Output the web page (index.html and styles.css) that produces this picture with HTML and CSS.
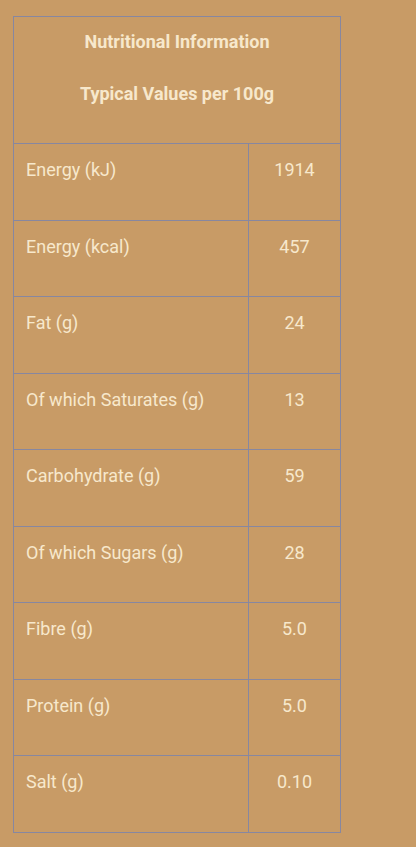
FILE: index.html
```html
<!DOCTYPE html>
<html>
<head>
<meta charset="utf-8">
<link rel="stylesheet" href="styles.css">
</head>
<body>
<div class="wrap">
<table class="nutri">
  <thead>
    <tr>
      <th colspan="2" class="head">
        <p class="title">Nutritional Information</p>
        <p class="title">Typical Values per 100g</p>
      </th>
    </tr>
  </thead>
  <tbody>
    <tr><td class="label">Energy (kJ)</td><td class="val">1914</td></tr>
    <tr><td class="label">Energy (kcal)</td><td class="val">457</td></tr>
    <tr><td class="label">Fat (g)</td><td class="val">24</td></tr>
    <tr><td class="label">Of which Saturates (g)</td><td class="val">13</td></tr>
    <tr><td class="label">Carbohydrate (g)</td><td class="val">59</td></tr>
    <tr><td class="label">Of which Sugars (g)</td><td class="val">28</td></tr>
    <tr><td class="label">Fibre (g)</td><td class="val">5.0</td></tr>
    <tr><td class="label">Protein (g)</td><td class="val">5.0</td></tr>
    <tr><td class="label">Salt (g)</td><td class="val">0.10</td></tr>
  </tbody>
</table>
</div>
</body>
</html>
```
FILE: styles.css
```css
html, body {
  margin: 0;
  padding: 0;
  background: #c89b66;
}
body {
  font-family: Roboto, "Liberation Sans", sans-serif;
  color: #f7e8cc;
}
.wrap {
  padding: 16px 0 0 13px;
}
.nutri {
  border-collapse: collapse;
  width: 328px;
}
.nutri th, .nutri td {
  border: 1px solid #8787a0;
  vertical-align: top;
}
.head {
  height: 126px;
  padding: 0;
  text-align: center;
  font-weight: 700;
  font-size: 18px;
}
.title {
  margin: 15px 0 0;
  line-height: 20px;
}
.title + .title {
  margin-top: 32px;
}
.label, .val {
  height: 77px;
  box-sizing: border-box;
  padding: 12px 12px 0;
  font-size: 18px;
  line-height: 27px;
  font-weight: 400;
}
.nutri tbody tr:nth-child(even) td {
  height: 76px;
}
.label {
  width: 235px;
}
.val {
  text-align: center;
}
```
